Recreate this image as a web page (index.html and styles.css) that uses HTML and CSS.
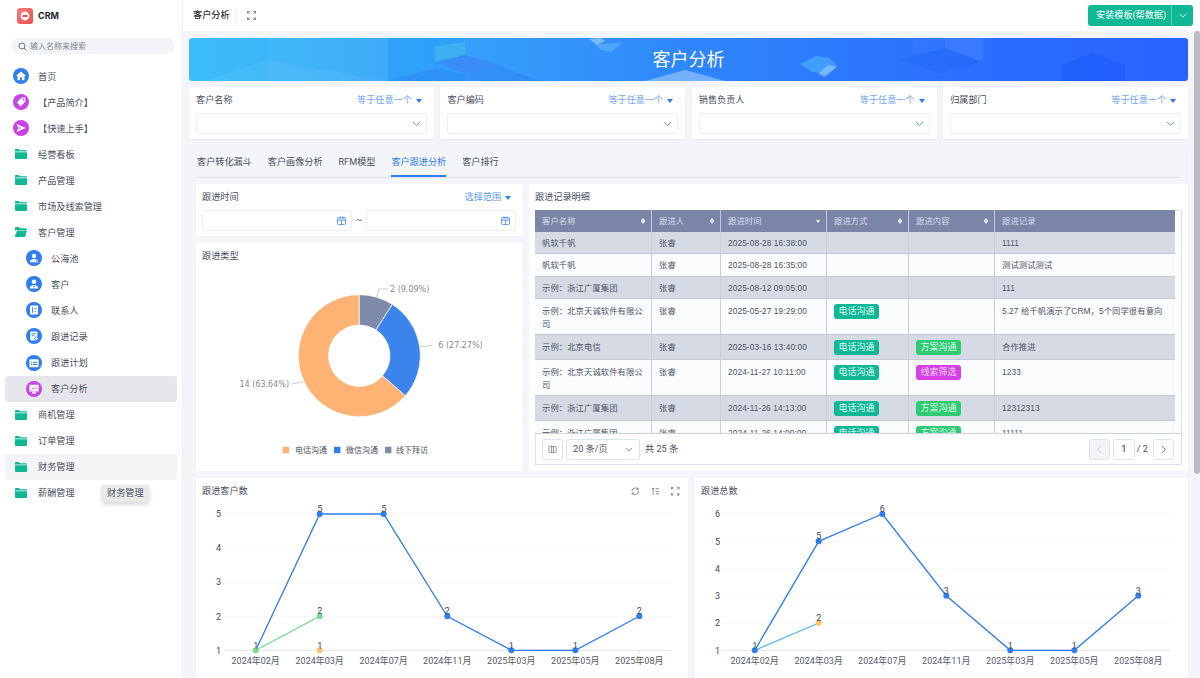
FILE: index.html
```html
<!DOCTYPE html>
<html lang="zh-CN">
<head>
<meta charset="utf-8">
<title>客户分析</title>
<link rel="stylesheet" href="styles.css">
</head>
<body>
<div class="app">
  <aside class="sidebar">
    <div class="brand">
      <svg class="logo" viewBox="0 0 16 16"><defs><linearGradient id="lg" x1="0" y1="0" x2="1" y2="1"><stop offset="0" stop-color="#f47d7d"/><stop offset="1" stop-color="#e8504f"/></linearGradient></defs><rect width="16" height="16" rx="3" fill="url(#lg)"/><circle cx="8" cy="8" r="4.4" fill="#fff"/><rect x="5.4" y="7" width="5.2" height="2" rx=".6" fill="#e8504f"/></svg>
      <span class="brand-name">CRM</span>
    </div>
    <div class="search">
      <svg class="search-icon" viewBox="0 0 10 10"><circle cx="4.4" cy="4.4" r="3.3" fill="none" stroke="#555b68" stroke-width=".9"/><path d="M6.9 6.9 9 9" stroke="#555b68" stroke-width=".9" stroke-linecap="round"/></svg>
      <span>输入名称来搜索</span>
    </div>
    <nav class="menu">
      <a class="item"><svg class="ic" viewBox="0 0 16 16"><circle cx="8" cy="8" r="8" fill="#2f7df0"/><path d="M8 3.4 3 7.8h1.5v4.4h2.4V9.4h2.2v2.8h2.4V7.8H13z" fill="#fff"/></svg>首页</a>
      <a class="item"><svg class="ic" viewBox="0 0 16 16"><circle cx="8" cy="8" r="8" fill="#c944e6"/><path d="M8.6 3.6h3.8v3.8l-4.7 5-3.9-3.9z" fill="#fff"/><circle cx="10.5" cy="5.5" r=".9" fill="#c944e6"/></svg>【产品简介】</a>
      <a class="item"><svg class="ic" viewBox="0 0 16 16"><circle cx="8" cy="8" r="8" fill="#c944e6"/><path d="M3.6 4 12.8 8l-9.2 4 1.3-3.3 4-.7-4-.7z" fill="#fff"/></svg>【快速上手】</a>
      <a class="item"><svg class="ic folder" viewBox="0 0 12 10"><path d="M0 .8C0 .4.4 0 .8 0h3.1l1 1.3h6.3c.4 0 .8.4.8.8v.4H0zM0 3.2h12v5.9c0 .5-.4.9-.8.9H.8C.4 10 0 9.600 0 9.100z" fill="#10b896"/></svg>经营看板</a>
      <a class="item"><svg class="ic folder" viewBox="0 0 12 10"><path d="M0 .8C0 .4.4 0 .8 0h3.1l1 1.3h6.3c.4 0 .8.4.8.8v.4H0zM0 3.2h12v5.9c0 .5-.4.9-.8.9H.8C.4 10 0 9.600 0 9.100z" fill="#10b896"/></svg>产品管理</a>
      <a class="item"><svg class="ic folder" viewBox="0 0 12 10"><path d="M0 .8C0 .4.4 0 .8 0h3.1l1 1.3h6.3c.4 0 .8.4.8.8v.4H0zM0 3.2h12v5.9c0 .5-.4.9-.8.9H.8C.4 10 0 9.600 0 9.100z" fill="#10b896"/></svg>市场及线索管理</a>
      <a class="item"><svg class="ic folder" viewBox="0 0 12 10"><path d="M0 .8C0 .4.400 0 .8 0h3.100l1 1.300h5.900c.4 0 .7.3.7.7v.9H2.300L0 3.600z" fill="#10b896"/><path d="M2.300 3.400H12L10.300 9.300c-.1.400-.5.700-.9.700H.8C.4 10 0 9.700 0 9.300V8.500z" fill="#10b896"/></svg>客户管理</a>
      <a class="item child"><svg class="ic" viewBox="0 0 16 16"><circle cx="8" cy="8" r="8" fill="#2f7df0"/><circle cx="8" cy="6" r="2.200" fill="#fff"/><path d="M3.800 12.300c.3-2.300 1.900-3.300 4.200-3.300s3.900 1 4.200 3.300z" fill="#fff"/><circle cx="10.800" cy="10.800" r="1.100" fill="#2f7df0" stroke="#fff" stroke-width=".5"/></svg>公海池</a>
      <a class="item child"><svg class="ic" viewBox="0 0 16 16"><circle cx="8" cy="8" r="8" fill="#2f7df0"/><circle cx="8" cy="5.800" r="2.300" fill="#fff"/><path d="M3.600 12.400c.3-2.500 2-3.500 4.400-3.500s4.100 1 4.400 3.500z" fill="#fff"/><path d="M8 9l-.7 1.400L8 12l.7-1.600z" fill="#2f7df0"/></svg>客户</a>
      <a class="item child"><svg class="ic" viewBox="0 0 16 16"><circle cx="8" cy="8" r="8" fill="#2f7df0"/><rect x="4" y="3.400" width="8" height="9.200" rx=".8" fill="#fff"/><rect x="6" y="5.200" width=".9" height="5.600" fill="#2f7df0"/><rect x="8.400" y="6" width="2" height=".8" fill="#2f7df0"/><rect x="8.400" y="8.800" width="2" height=".8" fill="#2f7df0"/></svg>联系人</a>
      <a class="item child"><svg class="ic" viewBox="0 0 16 16"><circle cx="8" cy="8" r="8" fill="#2f7df0"/><rect x="4.200" y="3.600" width="7.200" height="8.800" rx=".8" fill="#fff"/><rect x="5.600" y="5.400" width="4.200" height=".9" fill="#2f7df0"/><rect x="5.600" y="7.300" width="2.600" height=".9" fill="#2f7df0"/><circle cx="10.400" cy="10.600" r="1.700" fill="#fff" stroke="#2f7df0" stroke-width=".8"/></svg>跟进记录</a>
      <a class="item child"><svg class="ic" viewBox="0 0 16 16"><circle cx="8" cy="8" r="8" fill="#2f7df0"/><rect x="3.400" y="4.200" width="9.200" height="8" rx="1" fill="#fff"/><rect x="5" y="6.800" width="1.200" height="1" fill="#2f7df0"/><rect x="7" y="6.800" width="4" height="1" fill="#2f7df0"/><rect x="5" y="9" width="1.200" height="1" fill="#2f7df0"/><rect x="7" y="9" width="4" height="1" fill="#2f7df0"/></svg>跟进计划</a>
      <a class="item child active"><svg class="ic" viewBox="0 0 16 16"><circle cx="8" cy="8" r="8" fill="#c944e6"/><rect x="3.400" y="3.800" width="9.200" height="6.800" rx=".7" fill="#fff"/><path d="M5.400 12.600 7 10.400h2l1.600 2.200z" fill="#fff"/><path d="M5.300 8.700 7.200 7l1.300 1 2.200-2.100" fill="none" stroke="#c944e6" stroke-width=".8"/></svg>客户分析</a>
      <a class="item"><svg class="ic folder" viewBox="0 0 12 10"><path d="M0 .8C0 .4.4 0 .8 0h3.1l1 1.3h6.3c.4 0 .8.4.8.8v.4H0zM0 3.2h12v5.9c0 .5-.4.9-.8.9H.8C.4 10 0 9.600 0 9.100z" fill="#10b896"/></svg>商机管理</a>
      <a class="item"><svg class="ic folder" viewBox="0 0 12 10"><path d="M0 .8C0 .4.4 0 .8 0h3.1l1 1.3h6.3c.4 0 .8.4.8.8v.4H0zM0 3.2h12v5.9c0 .5-.4.9-.8.9H.8C.4 10 0 9.600 0 9.100z" fill="#10b896"/></svg>订单管理</a>
      <a class="item hover"><svg class="ic folder" viewBox="0 0 12 10"><path d="M0 .8C0 .4.4 0 .8 0h3.1l1 1.3h6.3c.4 0 .8.4.8.8v.4H0zM0 3.2h12v5.9c0 .5-.4.9-.8.9H.8C.4 10 0 9.600 0 9.100z" fill="#10b896"/></svg>财务管理</a>
      <a class="item"><svg class="ic folder" viewBox="0 0 12 10"><path d="M0 .8C0 .4.4 0 .8 0h3.1l1 1.3h6.3c.4 0 .8.4.8.8v.4H0zM0 3.2h12v5.9c0 .5-.4.9-.8.9H.8C.4 10 0 9.600 0 9.100z" fill="#10b896"/></svg>薪酬管理</a>
    </nav>
    <div class="tooltip">财务管理</div>
  </aside>

  <div class="main">
    <header class="topbar">
      <span class="page-title">客户分析</span>
      <i class="sep"></i>
      <svg class="expand" viewBox="0 0 10 10"><path d="M.5 3V.5H3M7 .5h2.500V3M9.500 7v2.500H7M3 9.500H.5V7M.8.8l2 2M9.200.8l-2 2M9.200 9.200l-2-2M.8 9.200l2-2" fill="none" stroke="#555b68" stroke-width=".8"/></svg>
      <div class="install">
        <span class="install-main">安装模板(帮数据)</span>
        <span class="install-arrow"><svg viewBox="0 0 10 6"><path d="M1 1l4 4 4-4" fill="none" stroke="#fff" stroke-width="1"/></svg></span>
      </div>
    </header>

    <div class="content">
      <div class="scrollbar"></div>

      <section class="banner">
        <svg class="banner-art" viewBox="0 0 999 43" preserveAspectRatio="none">
          <path d="M16 43 76 22 199 43z" fill="#fff" opacity=".05"/>
          <path d="M78 0h121v43H78z" fill="#fff" opacity=".04"/>
          <path d="M199 0h77v43H199z" fill="#1f9cf8" opacity=".35"/>
          <path d="M200 43 246 30 279 37 309 27 350 43z" fill="#2f6ff5" opacity=".3"/>
          <path d="M246 24 276 17 309 27 279 37z" fill="#3f79f6" opacity=".5"/>
          <path d="M246 8 276 4v13l-30 7z" fill="#62d6d8" opacity=".3"/>
          <path d="M400 1l12-1 4 3-8 4z" fill="#c6e0fc" opacity=".5"/>
          <path d="M406 6l27-1-11 9-10-2z" fill="#66b6fb" opacity=".55"/>
          <path d="M456 43l40-11 40 11z" fill="#b6dafa" opacity=".5"/>
          <path d="M611 26l16-8 14 2 7 8-11 8-14-2z" fill="#4cb1fb" opacity=".65"/>
          <path d="M629 36l10-9 9 2-12 10z" fill="#a9d5fb" opacity=".5"/>
          <path d="M711 22 756 10 794 24 751 35z" fill="#1a62f0" opacity=".3"/>
          <path d="M756 0h38v24l-38-14z" fill="#fff" opacity=".08"/>
          <path d="M724 0h32v10l-32 7z" fill="#fff" opacity=".03"/>
          <path d="M873 43V27l31-12 32 12v16z" fill="#1552f5" opacity=".4"/>
        </svg>
        <h1 class="banner-title">客户分析</h1>
      </section>

      <section class="filters">
        <div class="filter"><div class="filter-head"><span>客户名称</span><span class="op">等于任意一个<i class="tri"></i></span></div><div class="select"><svg class="chev" viewBox="0 0 10 6"><path d="M1 1l4 4 4-4" fill="none" stroke="#3d87f2" stroke-width=".9"/></svg></div></div>
        <div class="filter"><div class="filter-head"><span>客户编码</span><span class="op">等于任意一个<i class="tri"></i></span></div><div class="select"><svg class="chev" viewBox="0 0 10 6"><path d="M1 1l4 4 4-4" fill="none" stroke="#3d87f2" stroke-width=".9"/></svg></div></div>
        <div class="filter"><div class="filter-head"><span>销售负责人</span><span class="op">等于任意一个<i class="tri"></i></span></div><div class="select"><svg class="chev" viewBox="0 0 10 6"><path d="M1 1l4 4 4-4" fill="none" stroke="#3d87f2" stroke-width=".9"/></svg></div></div>
        <div class="filter"><div class="filter-head"><span>归属部门</span><span class="op">等于任意一个<i class="tri"></i></span></div><div class="select"><svg class="chev" viewBox="0 0 10 6"><path d="M1 1l4 4 4-4" fill="none" stroke="#3d87f2" stroke-width=".9"/></svg></div></div>
      </section>

      <section class="tabs-panel">
        <div class="tabs">
          <span class="tab">客户转化漏斗</span>
          <span class="tab">客户画像分析</span>
          <span class="tab">RFM模型</span>
          <span class="tab on">客户跟进分析</span>
          <span class="tab">客户排行</span>
        </div>

        <div class="top-grid">
          <div class="left-col">
            <div class="card time-card">
              <div class="filter-head"><span>跟进时间</span><span class="op strong">选择范围<i class="tri"></i></span></div>
              <div class="range">
                <div class="date"><svg class="cal" viewBox="0 0 10 10"><rect x=".6" y="1.800" width="8.800" height="7.600" rx="1.200" fill="none" stroke="#3d87f2" stroke-width=".9"/><path d="M.6 4.500h8.800M3.400.5v3M6.600.5v3M5 4.500v4.900" stroke="#3d87f2" stroke-width=".9" fill="none"/></svg></div>
                <span class="tilde">~</span>
                <div class="date"><svg class="cal" viewBox="0 0 10 10"><rect x=".6" y="1.800" width="8.800" height="7.600" rx="1.200" fill="none" stroke="#3d87f2" stroke-width=".9"/><path d="M.6 4.500h8.800M3.400.5v3M6.600.5v3M5 4.500v4.900" stroke="#3d87f2" stroke-width=".9" fill="none"/></svg></div>
              </div>
            </div>
            <div class="card pie-card">
              <div class="card-title">跟进类型</div>
              <svg class="pie" viewBox="0 0 326 208">
                <path d="M209.410 132.640A61 61 0 1 1 163.300 31.700L163.300 62A30.700 30.700 0 1 0 186.500 112.800Z" fill="#feb273" stroke="#fff" stroke-width=".7"/>
                <path d="M196.250 41.370A61 61 0 0 1 209.410 132.640L186.500 112.800A30.700 30.700 0 0 0 179.880 66.870Z" fill="#3b84eb" stroke="#fff" stroke-width=".7"/>
                <path d="M163.300 31.700A61 61 0 0 1 196.250 41.370L179.880 66.870A30.700 30.700 0 0 0 163.300 62Z" fill="#7f8aab" stroke="#fff" stroke-width=".7"/>
                <path d="M180.700 33.700 183 26H192M224 83.700 236.700 82.300M107.300 118.700 95.700 121" fill="none" stroke="#b5b5b5" stroke-width=".7"/>
                <text class="pie-label" x="194" y="29">2 (9.09%)</text>
                <text class="pie-label" x="242.300" y="85.300">6 (27.27%)</text>
                <text class="pie-label" x="93" y="124" text-anchor="end">14 (63.64%)</text>
                <rect x="86.700" y="183.800" width="6.400" height="6.400" fill="#feb273"/>
                <text class="legend" x="99" y="190">电话沟通</text>
                <rect x="138" y="183.800" width="6.400" height="6.400" fill="#2f7df0"/>
                <text class="legend" x="150" y="190">微信沟通</text>
                <rect x="189" y="183.800" width="6.400" height="6.400" fill="#7f8aab"/>
                <text class="legend" x="200" y="190">线下拜访</text>
              </svg>
            </div>
          </div>

          <div class="card detail-card">
            <div class="card-title">跟进记录明细</div>
            <div class="table-box">
              <div class="table-clip">
                <table class="records">
                  <colgroup><col class="c1"><col class="c2"><col class="c3"><col class="c4"><col class="c5"><col class="c6"></colgroup>
                  <thead>
                    <tr>
                      <th>客户名称<i class="sort"></i></th>
                      <th>跟进人<i class="sort"></i></th>
                      <th>跟进时间<i class="sort-down"></i></th>
                      <th>跟进方式<i class="sort"></i></th>
                      <th>跟进内容<i class="sort"></i></th>
                      <th>跟进记录</th>
                    </tr>
                  </thead>
                  <tbody>
                    <tr class="odd"><td>帆软千帆</td><td>张睿</td><td>2025-08-28 16:38:00</td><td></td><td></td><td>1111</td></tr>
                    <tr><td>帆软千帆</td><td>张睿</td><td>2025-08-28 16:35:00</td><td></td><td></td><td>测试测试测试</td></tr>
                    <tr class="odd"><td>示例：浙江广厦集团</td><td>张睿</td><td>2025-08-12 09:05:00</td><td></td><td></td><td>111</td></tr>
                    <tr><td>示例：北京天诚软件有限公司</td><td>张睿</td><td>2025-05-27 19:29:00</td><td><span class="tag teal">电话沟通</span></td><td></td><td>5.27 给千帆演示了CRM，5个同学很有意向</td></tr>
                    <tr class="odd"><td>示例：北京电信</td><td>张睿</td><td>2025-03-16 13:40:00</td><td><span class="tag teal">电话沟通</span></td><td><span class="tag green">方案沟通</span></td><td>合作推进</td></tr>
                    <tr><td>示例：北京天诚软件有限公司</td><td>张睿</td><td>2024-11-27 10:11:00</td><td><span class="tag teal">电话沟通</span></td><td><span class="tag pink">线索筛选</span></td><td>1233</td></tr>
                    <tr class="odd"><td>示例：浙江广厦集团</td><td>张睿</td><td>2024-11-26 14:13:00</td><td><span class="tag teal">电话沟通</span></td><td><span class="tag green">方案沟通</span></td><td>12312313</td></tr>
                    <tr><td>示例：浙江广厦集团</td><td>张睿</td><td>2024-11-26 14:09:00</td><td><span class="tag teal">电话沟通</span></td><td><span class="tag green">方案沟通</span></td><td>11111</td></tr>
                  </tbody>
                </table>
              </div>
              <div class="pager">
                <span class="pbtn"><svg viewBox="0 0 10 10"><rect x="1" y="1.500" width="8" height="7" rx="1.500" fill="none" stroke="#666c7a" stroke-width=".8"/><path d="M4 1.500v7M6 1.500v7" stroke="#666c7a" stroke-width=".8"/></svg></span>
                <span class="psize">20 条/页<svg viewBox="0 0 10 6"><path d="M1 1l4 4 4-4" fill="none" stroke="#555b68" stroke-width=".9"/></svg></span>
                <span class="ptotal">共 25 条</span>
                <span class="pspace"></span>
                <span class="pbtn disabled"><svg viewBox="0 0 6 10"><path d="M5 1 1 5l4 4" fill="none" stroke="#c2c6d0" stroke-width=".9"/></svg></span>
                <span class="pnum">1</span>
                <span class="pof">/ 2</span>
                <span class="pbtn"><svg viewBox="0 0 6 10"><path d="M1 1l4 4-4 4" fill="none" stroke="#444b58" stroke-width=".9"/></svg></span>
              </div>
            </div>
          </div>
        </div>

        <div class="bottom-grid">
          <div class="card chart-card">
            <div class="chart-head">
              <span>跟进客户数</span>
              <span class="tools">
                <svg viewBox="0 0 10 10"><path d="M1 5a4 4 0 0 1 7-2.600M9 5a4 4 0 0 1-7 2.600" fill="none" stroke="#555b68" stroke-width=".8"/><path d="M8.600 .8v2H6.600M1.400 9.200v-2h2" fill="none" stroke="#555b68" stroke-width=".8"/></svg>
                <svg viewBox="0 0 10 10"><path d="M2.500 9V1.200M.8 2.800l1.700-1.700 1.700 1.700M5.500 2h4M5.500 5h4M5.500 8h4" fill="none" stroke="#555b68" stroke-width=".8"/></svg>
                <svg viewBox="0 0 10 10"><path d="M.5 3V.5H3M7 .5h2.500V3M9.500 7v2.500H7M3 9.500H.5V7M.8.8l2 2M9.200.8l-2 2M9.200 9.200l-2-2M.8 9.200l2-2" fill="none" stroke="#555b68" stroke-width=".8"/></svg>
              </span>
            </div>
            <svg class="chart" viewBox="0 0 492 178">
              <g class="grid"><path d="M28 14H475M28 47.700H475M28 82H475M28 116.300H475"/></g>
              <path class="axis" d="M28 150.300H475M59.700 150.300v3M123.700 150.300v3M187.700 150.300v3M251.300 150.300v3M315.300 150.300v3M379.300 150.300v3M443.300 150.300v3"/>
              <g class="ylab"><text x="25" y="17">5</text><text x="25" y="51">4</text><text x="25" y="85">3</text><text x="25" y="119.500">2</text><text x="25" y="153.500">1</text></g>
              <g class="xlab"><text x="59.700" y="164">2024年02月</text><text x="123.700" y="164">2024年03月</text><text x="187.700" y="164">2024年07月</text><text x="251.300" y="164">2024年11月</text><text x="315.300" y="164">2025年03月</text><text x="379.300" y="164">2025年05月</text><text x="443.300" y="164">2025年08月</text></g>
              <polyline class="line blue" points="59.700,150.300 123.700,14 187.700,14 251.300,116.300 315.300,150.300 379.300,150.300 443.300,116.300"/>
              <polyline class="line mint" points="59.700,150.300 123.700,116.300"/>
              <g class="blue-dot"><circle cx="123.700" cy="14" r="3"/><circle cx="187.700" cy="14" r="3"/><circle cx="251.300" cy="116.300" r="3"/><circle cx="315.300" cy="150.300" r="3"/><circle cx="379.300" cy="150.300" r="3"/><circle cx="443.300" cy="116.300" r="3"/></g>
              <circle class="mint-dot" cx="59.700" cy="150.300" r="3"/><circle class="mint-dot" cx="123.700" cy="116.300" r="3"/>
              <circle class="amber-dot" cx="123.700" cy="150.300" r="3"/>
              <g class="val"><text x="59.700" y="148.500">1</text><text x="123.700" y="12">5</text><text x="187.700" y="12">5</text><text x="251.300" y="114">2</text><text x="315.300" y="148.500">1</text><text x="379.300" y="148.500">1</text><text x="443.300" y="114">2</text><text x="123.700" y="114">2</text><text x="123.700" y="148.500">1</text></g>
            </svg>
          </div>
          <div class="card chart-card">
            <div class="chart-head"><span>跟进总数</span></div>
            <svg class="chart" viewBox="0 0 492 178">
              <g class="grid"><path d="M28 14H475M28 41.300H475M28 68.300H475M28 95.700H475M28 123H475"/></g>
              <path class="axis" d="M28 150.300H475M59.700 150.300v3M123.700 150.300v3M187.300 150.300v3M251.300 150.300v3M315.300 150.300v3M379.300 150.300v3M443.300 150.300v3"/>
              <g class="ylab"><text x="25" y="17">6</text><text x="25" y="44.500">5</text><text x="25" y="71.500">4</text><text x="25" y="99">3</text><text x="25" y="126">2</text><text x="25" y="153.500">1</text></g>
              <g class="xlab"><text x="59.700" y="164">2024年02月</text><text x="123.700" y="164">2024年03月</text><text x="187.300" y="164">2024年07月</text><text x="251.300" y="164">2024年11月</text><text x="315.300" y="164">2025年03月</text><text x="379.300" y="164">2025年05月</text><text x="443.300" y="164">2025年08月</text></g>
              <polyline class="line sky" points="59.700,150.300 123.700,123"/>
              <polyline class="line blue" points="59.700,150.300 123.700,41.300 187.300,14 251.300,95.700 315.300,150.300 379.300,150.300 443.300,95.700"/>
              <g class="blue-dot"><circle cx="59.700" cy="150.300" r="3"/><circle cx="123.700" cy="41.300" r="3"/><circle cx="187.300" cy="14" r="3"/><circle cx="251.300" cy="95.700" r="3"/><circle cx="315.300" cy="150.300" r="3"/><circle cx="379.300" cy="150.300" r="3"/><circle cx="443.300" cy="95.700" r="3"/></g>
              <circle class="amber-dot" cx="123.700" cy="123" r="3"/>
              <g class="val"><text x="59.700" y="148.500">1</text><text x="123.700" y="39">5</text><text x="187.300" y="12">6</text><text x="251.300" y="93.500">3</text><text x="315.300" y="148.500">1</text><text x="379.300" y="148.500">1</text><text x="443.300" y="93.500">3</text><text x="123.700" y="121">2</text></g>
            </svg>
          </div>
        </div>
      </section>
    </div>
  </div>
</div>
</body>
</html>
```

FILE: styles.css
```css
* { box-sizing: border-box; }
html, body { margin: 0; height: 100%; overflow: hidden; }
body {
  font-family: Roboto, "Noto Sans CJK SC", "Noto Sans", sans-serif;
  font-size: 9.150px;
  line-height: 13px;
  color: #4a505e;
  background: #f4f5f9;
}
.app { display: flex; width: 1200px; height: 678px; }

/* sidebar */
.sidebar {
  position: relative;
  flex: 0 0 183px;
  background: #fff;
  border-right: 1px solid #eef0f4;
}
.brand { display: flex; align-items: center; height: 31px; padding: 0 0 0 17px; gap: 5px; }
.logo { width: 16px; height: 16px; }
.brand-name { font-family: Inter, sans-serif; font-weight: 700; color: #1f2633; font-size: 9px; }
.search {
  display: flex; align-items: center; gap: 3px;
  height: 16px; margin: 7px 7px 0 11px; padding-left: 7px;
  background: #f3f4f7; border-radius: 8px;
  font-size: 8px; color: #7d8390;
}
.search-icon { width: 9px; height: 9px; }
.menu { display: flex; flex-direction: column; margin-top: 9px; padding: 0 5px; }
.item {
  display: flex; align-items: center; gap: 9px;
  height: 26px; margin-bottom: .06px; padding: 2px 0 0 8px;
  border-radius: 3px; color: #4a505e;
}
.ic { width: 16px; height: 16px; flex: none; margin-top: -2px; }
.ic.folder { width: 12px; height: 10px; margin: -2px 2px 0; }
.child { padding-left: 21px; }
.active { background: #e6e7ec; }
.hover { background: #f3f4f6; }
.tooltip {
  position: absolute; left: 102px; top: 485px;
  padding: 2px 5px; height: 17px;
  background: #e9e9e9; border-radius: 2px; color: #4a505e;
  box-shadow: 0 2px 5px rgba(0,0,0,.18);
}

/* main */
.main { flex: 1; min-width: 0; display: flex; flex-direction: column; }
.topbar {
  flex: 0 0 31px; display: flex; align-items: center;
  background: #fff; padding: 0 7px 0 10px;
}
.page-title { font-weight: 500; color: #2a303c; }
.sep { width: 1px; height: 13px; margin: 0 10px 0 6px; background: #eef0f3; }
.expand { width: 9px; height: 9px; }
.install { display: flex; margin-left: auto; height: 21px; color: #fff; line-height: 21px; }
.install-main { width: 84px; padding-left: 8px; background: #10b896; border-radius: 3px 0 0 3px; border-right: 1px solid #5bd0b8; }
.install-arrow { width: 21px; display: flex; align-items: center; justify-content: center; background: #10b896; border-radius: 0 3px 3px 0; }
.install-arrow svg { width: 8px; height: 5px; }

.content { position: relative; flex: 1; min-height: 0; overflow: hidden; padding: 7px 12px 0 6px; }
.scrollbar { position: absolute; right: 0; top: 0; width: 6px; height: 443px; background: #babbc4; border-radius: 3px; }

.banner {
  position: relative; height: 43px; border-radius: 3px; overflow: hidden;
  background: linear-gradient(90deg, #3cbdf7 0%, #36a3f9 25%, #2f86fb 50%, #2b6eff 78%, #2962ff 100%);
  display: flex; align-items: center; justify-content: center;
}
.banner-art { position: absolute; inset: 0; width: 100%; height: 100%; }
.banner-title { position: relative; margin: 0; font-size: 18px; font-weight: 400; color: #fff; line-height: 24px; letter-spacing: 0; }

.filters { display: grid; grid-template-columns: repeat(4, 1fr); gap: 6.670px; margin-top: 6px; }
.filter { height: 52px; padding: 7px 7px 0; background: #fff; box-shadow: 0 1px 2px rgba(30,40,80,.05); }
.filter-head { display: flex; justify-content: space-between; height: 13px; padding-right: 5px; }
.op { color: #6fa4f2; display: flex; align-items: center; }
.op.strong { color: #5a97f3; }
.tri { display: inline-block; margin-left: 4px; width: 0; height: 0; border-left: 3.500px solid transparent; border-right: 3.500px solid transparent; border-top: 4px solid #2f7df0; }
.select { position: relative; height: 21px; margin-top: 6px; border: 1px solid #eceef3; border-radius: 3px; background: #fff; display: flex; align-items: center; justify-content: flex-end; padding-right: 5px; }
.chev { width: 9px; height: 5.500px; }

.tabs-panel { margin-top: 7px; padding: 0 0 0 7px; border-right: 1px solid #eff0f5; }
.tabs { display: flex; gap: 16px; height: 32px; margin: 0 7px 0 1px; border-bottom: 1px solid #e2e4ea; }
.tab { line-height: 33px; height: 31px; color: #4a505e; }
.tab.on { color: #2f7df0; border-bottom: 2px solid #2f7df0; }

.top-grid { display: grid; grid-template-columns: 326px 1fr; gap: 7px; margin: 6px -1px 0 0; height: 287px; }
.left-col { display: flex; flex-direction: column; gap: 7px; min-height: 0; }
.card { background: #fff; }
.time-card { height: 52px; padding: 7px 6px 0; }
.range { display: flex; align-items: center; margin-top: 6px; }
.date { width: 150px; height: 21px; border: 1px solid #eceef3; border-radius: 3px; display: flex; align-items: center; justify-content: flex-end; padding-right: 5px; }
.cal { width: 9px; height: 9px; }
.tilde { width: 14px; text-align: center; color: #555; }
.pie-card { flex: 1; min-height: 0; }
.card-title { padding: 7px 6px 0; height: 20px; color: #4a505e; }
.pie { display: block; width: 326px; height: 208px; }
.pie-label { font-family: "DejaVu Sans", sans-serif; font-size: 8px; fill: #8a8a8a; }
.legend { font-size: 8px; fill: #4a505e; }

.detail-card { padding-bottom: 6px; min-width: 0; }
.detail-card .card-title { height: 26px; }
.table-box { margin: 0 6px; height: 255px; border: 1px solid #dfe1e8; }
.table-clip { height: 224px; overflow: hidden; border-bottom: 1px solid #cfd3de; margin: -1px -1px 0 -1px; }
.records {
  width: 640px; table-layout: fixed; border-collapse: separate; border-spacing: 0;
  font-family: "Liberation Sans", "Noto Sans CJK SC", sans-serif;
  font-size: 8.300px; letter-spacing: .1px; line-height: 12.600px;
}
.c1 { width: 117px; } .c2 { width: 69px; } .c3 { width: 106px; } .c4 { width: 82px; } .c5 { width: 86px; } .c6 { width: 180px; }
.records th {
  position: relative; height: 22px; padding: 1px 7px 0; text-align: left; font-weight: 400;
  background: #7a85a8; color: #d8dce8; border-right: 1px solid #c5cadb;
}
.records th:last-child { border-right: 0; }
.records td {
  padding: 5px 7px 3.800px; vertical-align: baseline;
  border-bottom: 1px solid #c4c9d8; border-right: 1px solid #c9cddd;
  color: #4f5563; background: #fafbfd; word-break: break-all;
}
.records td:last-child { border-right: 0; }
.records .odd td { background: #d6dae5; }
.sort, .sort-down { position: absolute; right: 6px; top: 50%; }
.sort { width: 4px; height: 6px; margin-top: -3px; background: #dfe3ee; clip-path: polygon(50% 0, 100% 38%, 0 38%, 0 62%, 100% 62%, 50% 100%, 0 62%, 100% 62%, 100% 38%, 0 38%); border-radius: 1px; }
.sort-down { margin-top: -1.500px; border-left: 2.500px solid transparent; border-right: 2.500px solid transparent; border-top: 3px solid #fff; }
.tag { display: inline-block; height: 15px; line-height: 15px; padding: 0 4.500px; border-radius: 3px; color: #dff7ef; font-size: 9px; letter-spacing: 0; }
.teal { background: #0fb797; }
.green { background: #2fcb72; }
.pink { background: #d63ee8; color: #f6d9fb; }

.pager { display: flex; align-items: center; height: 31px; padding: 0 7px 0 6px; }
.pbtn { width: 21px; height: 21px; border: 1px solid #e0e3ea; border-radius: 3px; display: flex; align-items: center; justify-content: center; }
.pbtn svg { width: 9px; height: 9px; }
.pbtn.disabled { background: #f3f4f7; }
.psize { width: 74px; height: 21px; margin-left: 3px; padding: 0 6px; border: 1px solid #e0e3ea; border-radius: 3px; display: flex; align-items: center; justify-content: space-between; }
.psize svg { width: 8px; height: 5px; }
.ptotal { margin-left: 5px; }
.pspace { flex: 1; }
.pnum { width: 22px; height: 21px; margin-left: 3px; border: 1px solid #e0e3ea; border-radius: 3px; text-align: center; line-height: 19px; color: #333; }
.pof { margin: 0 5px 0 2px; }

.bottom-grid { display: grid; grid-template-columns: 492px 493px; gap: 7px; margin-top: 7px; }
.chart-card { height: 210px; }
.chart-head { display: flex; justify-content: space-between; align-items: center; height: 22px; padding: 5px 8.500px 0 6px; }
.tools { display: flex; gap: 11.500px; }
.tools svg { width: 8.500px; height: 8.500px; }
.chart { display: block; width: 492px; height: 178px; }
.grid path { stroke: #eeeff2; stroke-width: .8; stroke-dasharray: 2 2; fill: none; }
.axis { stroke: #dcdde2; stroke-width: .8; fill: none; }
.ylab text { font-size: 9px; fill: #444a57; text-anchor: end; }
.xlab text { font-size: 9px; fill: #555b68; text-anchor: middle; }
.val text { font-size: 9px; fill: #444a57; text-anchor: middle; }
.line { fill: none; stroke-width: 1.300; }
.blue { stroke: #2f7df0; }
.mint { stroke: #74db8f; }
.sky { stroke: #5cb6f2; }
.blue-dot circle { fill: #2f7df0; }
.mint-dot { fill: #74db8f; }
.amber-dot { fill: #fcc670; }
```
